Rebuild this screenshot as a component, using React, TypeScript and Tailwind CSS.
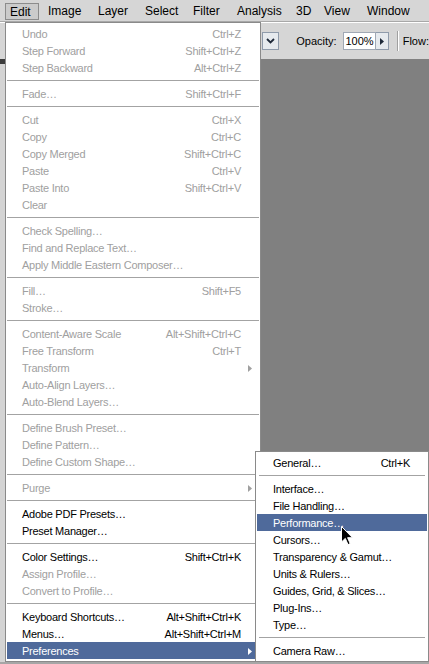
import React from "react";

type Item = { label: string; shortcut?: string; disabled?: boolean; arrow?: boolean; active?: boolean };

const editGroups: Item[][] = [
  [
    { label: "Undo", shortcut: "Ctrl+Z", disabled: true },
    { label: "Step Forward", shortcut: "Shift+Ctrl+Z", disabled: true },
    { label: "Step Backward", shortcut: "Alt+Ctrl+Z", disabled: true },
  ],
  [{ label: "Fade...", shortcut: "Shift+Ctrl+F", disabled: true }],
  [
    { label: "Cut", shortcut: "Ctrl+X", disabled: true },
    { label: "Copy", shortcut: "Ctrl+C", disabled: true },
    { label: "Copy Merged", shortcut: "Shift+Ctrl+C", disabled: true },
    { label: "Paste", shortcut: "Ctrl+V", disabled: true },
    { label: "Paste Into", shortcut: "Shift+Ctrl+V", disabled: true },
    { label: "Clear", disabled: true },
  ],
  [
    { label: "Check Spelling...", disabled: true },
    { label: "Find and Replace Text...", disabled: true },
    { label: "Apply Middle Eastern Composer...", disabled: true },
  ],
  [
    { label: "Fill...", shortcut: "Shift+F5", disabled: true },
    { label: "Stroke...", disabled: true },
  ],
  [
    { label: "Content-Aware Scale", shortcut: "Alt+Shift+Ctrl+C", disabled: true },
    { label: "Free Transform", shortcut: "Ctrl+T", disabled: true },
    { label: "Transform", disabled: true, arrow: true },
    { label: "Auto-Align Layers...", disabled: true },
    { label: "Auto-Blend Layers...", disabled: true },
  ],
  [
    { label: "Define Brush Preset...", disabled: true },
    { label: "Define Pattern...", disabled: true },
    { label: "Define Custom Shape...", disabled: true },
  ],
  [{ label: "Purge", disabled: true, arrow: true }],
  [{ label: "Adobe PDF Presets..." }, { label: "Preset Manager..." }],
  [
    { label: "Color Settings...", shortcut: "Shift+Ctrl+K" },
    { label: "Assign Profile...", disabled: true },
    { label: "Convert to Profile...", disabled: true },
  ],
  [
    { label: "Keyboard Shortcuts...", shortcut: "Alt+Shift+Ctrl+K" },
    { label: "Menus...", shortcut: "Alt+Shift+Ctrl+M" },
    { label: "Preferences", arrow: true, active: true },
  ],
];

const prefGroups: Item[][] = [
  [{ label: "General...", shortcut: "Ctrl+K" }],
  [
    { label: "Interface..." },
    { label: "File Handling..." },
    { label: "Performance...", active: true },
    { label: "Cursors..." },
    { label: "Transparency & Gamut..." },
    { label: "Units & Rulers..." },
    { label: "Guides, Grid, & Slices..." },
    { label: "Plug-Ins..." },
    { label: "Type..." },
  ],
  [{ label: "Camera Raw..." }],
];

const menuBar = [
  { label: "Image", w: "w-[50px]" },
  { label: "Layer", w: "w-[47px]" },
  { label: "Select", w: "w-[48px]" },
  { label: "Filter", w: "w-[44px]" },
  { label: "Analysis", w: "w-[59px]" },
  { label: "3D", w: "w-[28px]" },
  { label: "View", w: "w-[43px]" },
  { label: "Window", w: "w-[50px]" },
];

function Arrow({ color }: { color: string }) {
  return (
    <svg width="4" height="7" viewBox="0 0 4 7" className="shrink-0">
      <path d="M0 0 L4 3.5 L0 7 Z" fill={color} />
    </svg>
  );
}

function MenuRow({ item, padL, padR }: { item: Item; padL: string; padR: string }) {
  const text = item.active ? "text-white" : item.disabled ? "text-[#a0a0a0]" : "text-black";
  return (
    <div
      className={`mx-px flex h-[17px] items-center pt-px ${padL} ${item.active ? "bg-[#4f6a9b]" : ""} ${text}`}
    >
      <span className="flex-1 whitespace-nowrap">{item.label.replace(/\.\.\./g, "…")}</span>
      {item.shortcut && <span className={`whitespace-nowrap ${padR}`}>{item.shortcut}</span>}
      {item.arrow && (
        <span className="flex w-[12px] pl-[1px]">
          <Arrow color={item.active ? "#ffffff" : item.disabled ? "#a0a0a0" : "#000000"} />
        </span>
      )}
    </div>
  );
}

function Menu({ groups, padL, padR, sepX }: { groups: Item[][]; padL: string; padR: string; sepX: string }) {
  return (
    <div className="flex flex-col border border-[#8a8a8a] bg-white py-[2px] text-[11px] leading-none tracking-[-0.25px]">
      {groups.map((g, gi) => (
        <React.Fragment key={gi}>
          {gi > 0 && <div className={`my-[4px] h-px bg-[#a3a3a3] ${sepX}`} />}
          {g.map((it) => (
            <MenuRow key={it.label} item={it} padL={padL} padR={padR} />
          ))}
        </React.Fragment>
      ))}
    </div>
  );
}

function Cursor() {
  return (
    <svg width="13" height="20" viewBox="0 0 13 20">
      <path
        d="M0.5 0.5 L0.5 16 L4.3 12.4 L7 18.6 L9.2 17.6 L6.6 11.7 L11.5 11.7 Z"
        fill="#000"
        stroke="#fff"
        strokeWidth="1"
        strokeLinejoin="miter"
      />
    </svg>
  );
}

export default function App() {
  return (
    <div className="relative flex h-[664px] w-[429px] flex-col overflow-hidden bg-[#808080] font-['Liberation_Sans',Arial,sans-serif] select-none">
      {/* menu bar */}
      <div className="flex h-[22px] shrink-0 items-start border-b border-[#a8a8a8] bg-[#d6d6d6] pl-[5px] text-[12px] leading-none text-black">
        <div className="mt-[3px] flex h-[17px] w-[34px] items-center border border-[#8c8c8c] bg-[#cbcbcb] pl-[4px]">
          Edit
        </div>
        <div className="ml-[9px] flex">
          {menuBar.map((m) => (
            <span key={m.label} className={`${m.w} pt-[5px]`}>
              {m.label}
            </span>
          ))}
        </div>
      </div>

      {/* options bar */}
      <div className="flex h-[37px] shrink-0 items-center border-t border-white bg-[#d6d6d6] pl-[262px] text-[11px] leading-none text-black">
        <div className="flex h-[18px] w-[18px] items-center justify-center border border-[#8f9bab] bg-[#e6eaee]">
          <svg width="9" height="6" viewBox="0 0 9 6">
            <path d="M1 1 L4.5 4.5 L8 1" stroke="#1f2a3a" strokeWidth="1.8" fill="none" />
          </svg>
        </div>
        <span className="ml-[17px]">Opacity:</span>
        <div className="ml-[6px] flex h-[18px] w-[35px] items-center justify-center border border-[#a0a8b4] bg-white">
          100%
        </div>
        <div className="flex h-[18px] w-[13px] items-center justify-center border border-l-0 border-[#8f9bab] bg-[#e6eaee]">
          <svg width="4" height="7" viewBox="0 0 4 7">
            <path d="M0 0 L4 3.5 L0 7 Z" fill="#1f2a3a" />
          </svg>
        </div>
        <div className="ml-[8px] h-[20px] w-[2px] border-l border-[#a0a0a0] bg-white" />
        <span className="ml-[4px]">Flow:</span>
      </div>

      {/* workspace */}
      <div className="flex flex-1">
        <div className="flex w-[5px] flex-col bg-[#d4d4d4]">
          <div className="h-[5px] bg-[#3c3c3c]" />
        </div>
        <div className="flex-1 bg-[#808080]" />
      </div>
      <div className="h-[2px] shrink-0 bg-[#a6a6a6]" />

      {/* edit menu */}
      <div className="absolute left-[5px] top-[22px] w-[256px]">
        <Menu groups={editGroups} padL="pl-[15px]" padR="pr-[18px]" sepX="mx-[1px]" />
      </div>

      {/* preferences submenu */}
      <div className="absolute left-[255px] top-[451px] w-[174px]">
        <Menu groups={prefGroups} padL="pl-[16px]" padR="pr-[17px]" sepX="mx-[3px]" />
      </div>

      {/* pointer */}
      <div className="absolute left-[341px] top-[526px]">
        <Cursor />
      </div>
    </div>
  );
}
